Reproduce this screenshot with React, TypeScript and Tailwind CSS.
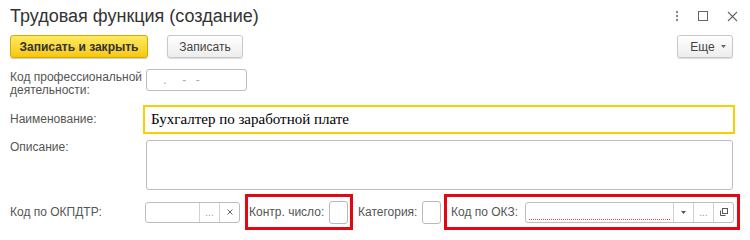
import React from "react";

const font = { fontFamily: '"Liberation Sans", Arial, sans-serif' };

function InputButton({ children }: { children: React.ReactNode }) {
  return (
    <div className="flex w-[20px] items-center justify-center border-l border-[#d2d2d2] text-[10px] text-[#999]">
      {children}
    </div>
  );
}

function SmallBox() {
  return <div className="h-[23px] w-[19px] rounded-[3px] border border-[#b9b9b9] bg-white" />;
}

export default function App() {
  return (
    <div className="relative h-[233px] w-[750px] overflow-hidden bg-white text-[12px] text-[#555]" style={font}>
      {/* title */}
      <div className="flex h-[32px] items-center pl-[10px] pr-[12px]">
        <div className="text-[18px] text-[#333]">Трудовая функция (создание)</div>
        <div className="ml-auto flex items-center gap-[19px]">
          <svg width="4" height="12" viewBox="0 0 4 12">
            <circle cx="2" cy="2" r="1.2" fill="#888" />
            <circle cx="2" cy="6" r="1.2" fill="#888" />
            <circle cx="2" cy="10" r="1.2" fill="#888" />
          </svg>
          <svg width="10" height="10" viewBox="0 0 10 10">
            <rect x="0.5" y="0.5" width="9" height="9" fill="none" stroke="#666" strokeWidth="1" />
          </svg>
          <svg width="11" height="11" viewBox="0 0 11 11">
            <path d="M1 1L10 10M10 1L1 10" stroke="#666" strokeWidth="1.1" />
          </svg>
        </div>
      </div>

      {/* command bar */}
      <div className="mt-[3px] flex h-[23px] pl-[10px] pr-[17px]">
        <button className="flex w-[138px] items-center justify-center rounded-[3px] border border-[#d0ac00] bg-gradient-to-b from-[#ffe95c] to-[#f6c900] text-[12px] font-bold text-[#333] shadow-[0_1px_1px_rgba(0,0,0,0.2)]">
          Записать и закрыть
        </button>
        <button className="ml-[19px] flex w-[76px] items-center justify-center rounded-[3px] border border-[#c8c8c8] bg-gradient-to-b from-white to-[#ededed] text-[12px] text-[#444] shadow-[0_1px_1px_rgba(0,0,0,0.15)]">
          Записать
        </button>
        <button className="ml-auto flex w-[56px] items-center justify-center gap-[6px] rounded-[3px] border border-[#c8c8c8] bg-gradient-to-b from-white to-[#ededed] pl-[6px] text-[12px] text-[#444] shadow-[0_1px_1px_rgba(0,0,0,0.15)]">
          Еще
          <svg width="5" height="3" viewBox="0 0 5 3">
            <path d="M0 0H5L2.5 3Z" fill="#666" />
          </svg>
        </button>
      </div>

      {/* Код профессиональной деятельности */}
      <div className="mt-[10px] flex pl-[10px]">
        <div className="w-[136px] pt-[3px] leading-[13px]">
          Код профессиональной
          <br />
          деятельности:
        </div>
        <div className="mt-[1px] flex h-[22px] w-[101px] items-center rounded-[3px] border border-[#bdbdbd] pl-[10px] text-[#aaa]">
          <span className="tracking-[3px]">&nbsp;.&nbsp;&nbsp;-&nbsp;-</span>
        </div>
      </div>

      {/* Наименование */}
      <div className="mt-[8px] flex items-center pl-[10px]">
        <div className="w-[133px] pb-[2px]">Наименование:</div>
        <div
          className="flex h-[29px] w-[592px] items-center border-2 border-[#f3d200] pl-[6px] text-[15px] text-black"
          style={{ fontFamily: '"Liberation Serif", "Times New Roman", serif' }}
        >
          Бухгалтер по заработной плате
        </div>
      </div>

      {/* Описание */}
      <div className="mt-[6px] flex pl-[10px]">
        <div className="w-[136px] leading-[14px]">Описание:</div>
        <div className="h-[50px] w-[587px] rounded-[3px] border border-[#bdbdbd]" />
      </div>

      {/* bottom row */}
      <div className="mt-[4px] flex h-[36px] items-center pl-[10px]">
        <div className="w-[135px] pb-[1px]">Код по ОКПДТР:</div>
        <div className="flex h-[21px] w-[95px] rounded-[3px] border border-[#bdbdbd]">
          <div className="flex-1" />
          <InputButton>...</InputButton>
          <InputButton>
            <svg width="6" height="6" viewBox="0 0 6 6">
              <path d="M0.5 0.5L5.5 5.5M5.5 0.5L0.5 5.5" stroke="#666" strokeWidth="1" />
            </svg>
          </InputButton>
        </div>

        <div className="ml-[5px] flex h-[36px] w-[108px] items-center border-[3px] border-[#e30613] pl-[1px]">
          <span className="w-[80px]">Контр. число:</span>
          <SmallBox />
        </div>

        <span className="ml-[5px] w-[64px]">Категория:</span>
        <SmallBox />

        <div className="ml-[3px] flex h-[36px] w-[296px] items-center border-[3px] border-[#e30613] pl-[4px]">
          <span className="w-[74px]">Код по ОКЗ:</span>
          <div className="flex h-[21px] w-[209px] rounded-[3px] border border-[#bdbdbd]">
            <div className="flex flex-1 items-end px-[3px] pb-[2px]">
              <div className="w-full border-b border-dotted border-[#e84a4a]" />
            </div>
            <InputButton>
              <svg width="5" height="3" viewBox="0 0 5 3">
                <path d="M0 0H5L2.5 3Z" fill="#555" />
              </svg>
            </InputButton>
            <InputButton>...</InputButton>
            <InputButton>
              <svg width="10" height="10" viewBox="0 0 10 10">
                <rect x="3.5" y="1.5" width="5" height="5" fill="none" stroke="#555" strokeWidth="1" />
                <path d="M1.5 3.5V8.5H6.5" fill="none" stroke="#555" strokeWidth="1" />
              </svg>
            </InputButton>
          </div>
        </div>
      </div>
    </div>
  );
}
